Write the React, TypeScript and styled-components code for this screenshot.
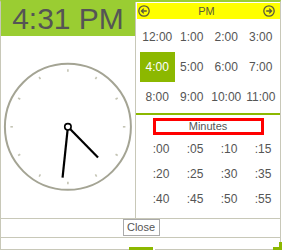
import React from "react";
import styled, { createGlobalStyle } from "styled-components";

const Global = createGlobalStyle`
  html, body { margin: 0; padding: 0; background: #fff; }
  body { font-family: "Liberation Sans", Arial, sans-serif; }
`;

const GRAY = "#c8c8b8";
const GREEN = "#9acd32";
const DARK_GREEN = "#8cb800";
const TEXT = "#555";

const Widget = styled.div`
  width: 281px;
  box-sizing: border-box;
  border-left: 1px solid ${GRAY};
  border-right: 1px solid ${GRAY};
  border-top: 2px solid ${GREEN};
`;

const Main = styled.div`
  display: flex;
  height: 217px;
  box-sizing: border-box;
  border-bottom: 1px solid ${GRAY};
`;

const LeftPanel = styled.div`
  width: 135px;
  flex: 0 0 135px;
  box-sizing: border-box;
  border-right: 1px solid ${GRAY};
  display: flex;
  flex-direction: column;
`;

const TimeHeader = styled.div`
  height: 34px;
  background: ${GREEN};
  color: ${TEXT};
  font-size: 30px;
  line-height: 34px;
  text-align: center;
`;

const ClockSvg = styled.svg`
  display: block;
  flex: 1;
`;

const RightPanel = styled.div`
  flex: 1;
  display: flex;
  flex-direction: column;
`;

const PeriodBar = styled.div`
  margin: 1px 0 0 1px;
  height: 16px;
  background: #ffff00;
  display: flex;
  align-items: center;
  justify-content: space-between;
  padding: 0 5px 0 1px;
  color: #5a5a3a;
  font-size: 11px;
`;

const ArrowButton = styled.svg`
  display: block;
  width: 12px;
  height: 12px;
`;

const HourGrid = styled.div`
  display: grid;
  grid-template-columns: repeat(4, 1fr);
  grid-auto-rows: 30px;
  margin: 3px 2px 0 4px;
`;

const HourCell = styled.div<{ $active?: boolean }>`
  display: flex;
  align-items: center;
  justify-content: center;
  font-size: 12px;
  color: ${(p) => (p.$active ? "#fff" : TEXT)};
  background: ${(p) => (p.$active ? DARK_GREEN : "transparent")};
`;

const Separator = styled.div`
  height: 2px;
  margin-top: 1px;
  background: ${DARK_GREEN};
`;

const MinutesLabel = styled.div`
  width: 111px;
  height: 17px;
  box-sizing: border-box;
  margin: 3px auto 0;
  border: 3px solid #ff0000;
  font-size: 11px;
  line-height: 11px;
  text-align: center;
  color: ${TEXT};
`;

const MinuteGrid = styled.div`
  display: grid;
  grid-template-columns: repeat(4, 1fr);
  grid-auto-rows: 25px;
  padding-left: 8px;
  margin-top: 1px;
`;

const MinuteCell = styled.div`
  display: flex;
  align-items: center;
  justify-content: center;
  font-size: 12px;
  color: ${TEXT};
`;

const ButtonRow = styled.div`
  height: 19px;
  box-sizing: border-box;
  border-bottom: 1px solid ${GRAY};
  display: flex;
  justify-content: center;
  align-items: flex-start;
  padding-left: 1px;
`;

const CloseButton = styled.button`
  width: 37px;
  height: 17px;
  box-sizing: border-box;
  border: 1px solid #aaa;
  background: #fff;
  padding: 0;
  font-family: "Liberation Sans", Arial, sans-serif;
  font-size: 11px;
  line-height: 15px;
  color: ${TEXT};
`;

const Footer = styled.div`
  height: 12px;
  display: flex;
  align-items: flex-end;
  margin-right: -2px;
`;

const Track = styled.div<{ $w?: number }>`
  flex: ${(p) => (p.$w ? `0 0 ${p.$w}px` : "1")};
  height: 1px;
  background: ${GRAY};
`;

const Thumb = styled.div`
  flex: 0 0 24px;
  height: 3px;
  background: ${DARK_GREEN};
  margin-right: 2px;
`;

const Grip = styled.div`
  flex: 0 0 9px;
  height: 8px;
  position: relative;
  &::before {
    content: "";
    position: absolute;
    left: 0;
    right: 0;
    bottom: 0;
    height: 3px;
    background: ${DARK_GREEN};
  }
  &::after {
    content: "";
    position: absolute;
    right: 0;
    width: 3px;
    top: 0;
    bottom: 0;
    background: ${DARK_GREEN};
  }
`;

const hours = ["12:00", "1:00", "2:00", "3:00", "4:00", "5:00", "6:00", "7:00", "8:00", "9:00", "10:00", "11:00"];
const minutes = [":00", ":05", ":10", ":15", ":20", ":25", ":30", ":35", ":40", ":45", ":50", ":55"];

const CX = 67.9;
const CY = 126.8;

function Clock() {
  const ticks = Array.from({ length: 12 }, (_, i) => {
    const a = (i * 30 * Math.PI) / 180;
    const s = Math.sin(a);
    const c = Math.cos(a);
    return (
      <line
        key={i}
        x1={CX + s * 55}
        y1={CY - c * 55}
        x2={CX + s * 57.5}
        y2={CY - c * 57.5}
        stroke="#c4c4b4"
        strokeWidth={1.6}
      />
    );
  });
  const hand = (deg: number, len: number) => {
    const a = (deg * Math.PI) / 180;
    return { x2: CX + Math.sin(a) * len, y2: CY - Math.cos(a) * len };
  };
  const h = hand(135.5, 43);
  const m = hand(186, 51);
  return (
    <ClockSvg viewBox="1 36 134 182" width={134} height={182}>
      <circle cx={CX} cy={CY} r={63} fill="none" stroke="#a4a494" strokeWidth={2} />
      {ticks}
      <line x1={CX} y1={CY} x2={h.x2} y2={h.y2} stroke="#000" strokeWidth={2.2} />
      <line x1={CX} y1={CY} x2={m.x2} y2={m.y2} stroke="#000" strokeWidth={2.2} />
      <circle cx={CX} cy={CY} r={3.2} fill="#fff" stroke="#000" strokeWidth={1.6} />
    </ClockSvg>
  );
}

function Arrow({ dir }: { dir: "left" | "right" }) {
  const path = dir === "left" ? "M8.8 6H3.4M5.8 3.6L3.4 6l2.4 2.4" : "M3.2 6h5.4M6.2 3.6L8.6 6 6.2 8.4";
  return (
    <ArrowButton viewBox="0 0 12 12">
      <circle cx={6} cy={6} r={5.2} fill="none" stroke="#5a5a3a" strokeWidth={1.3} />
      <path d={path} fill="none" stroke="#5a5a3a" strokeWidth={1.3} />
    </ArrowButton>
  );
}

export default function App() {
  return (
    <>
      <Global />
      <Widget>
        <Main>
          <LeftPanel>
            <TimeHeader>4:31 PM</TimeHeader>
            <Clock />
          </LeftPanel>
          <RightPanel>
            <PeriodBar>
              <Arrow dir="left" />
              <span>PM</span>
              <Arrow dir="right" />
            </PeriodBar>
            <HourGrid>
              {hours.map((t) => (
                <HourCell key={t} $active={t === "4:00"}>
                  {t}
                </HourCell>
              ))}
            </HourGrid>
            <Separator />
            <MinutesLabel>Minutes</MinutesLabel>
            <MinuteGrid>
              {minutes.map((t) => (
                <MinuteCell key={t}>{t}</MinuteCell>
              ))}
            </MinuteGrid>
          </RightPanel>
        </Main>
        <ButtonRow>
          <CloseButton>Close</CloseButton>
        </ButtonRow>
        <Footer>
          <Track $w={128} />
          <Thumb />
          <Track />
          <Grip />
        </Footer>
      </Widget>
    </>
  );
}
